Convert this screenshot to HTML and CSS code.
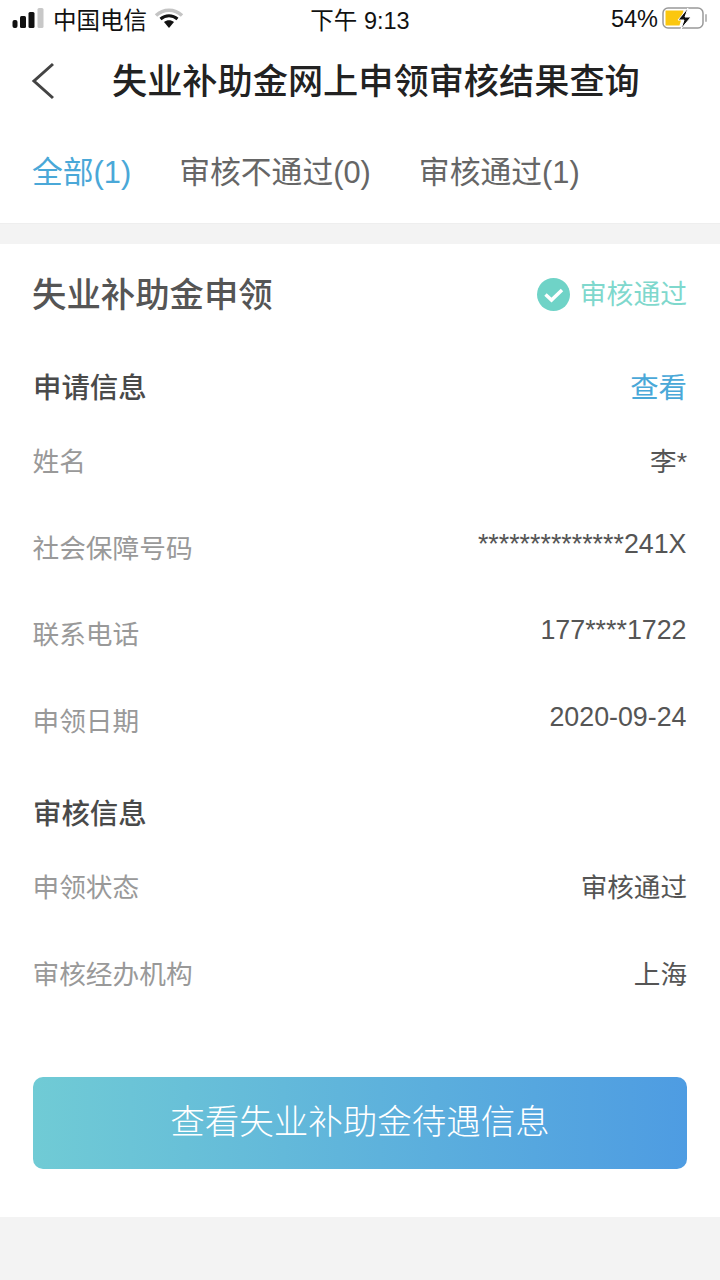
FILE: index.html
```html
<!DOCTYPE html>
<html lang="zh-CN">
<head>
<meta charset="utf-8">
<title>失业补助金网上申领审核结果查询</title>
<link rel="stylesheet" href="styles.css">
</head>
<body>
<div class="status">
  <div class="status-left">
    <svg class="signal" width="34" height="22" viewBox="0 0 34 22"><rect x="0.500" y="12" width="5" height="8" rx="2" fill="#111"/><rect x="8" y="8" width="6" height="12" rx="1.500" fill="#111"/><rect x="16.500" y="4" width="6" height="16" rx="1.500" fill="#111"/><rect x="25.500" y="0" width="6" height="20" rx="1.500" fill="#c8c8c8"/></svg>
    <span class="carrier">中国电信</span>
    <svg class="wifi" width="30" height="22" viewBox="0 0 30 22"><path d="M2 7.500C9.500 .5 20.500 .5 28 7.500" fill="none" stroke="#c4c4c4" stroke-width="3.500"/><path d="M6.500 11C11.500 6.700 18.500 6.700 23.500 11" fill="none" stroke="#111" stroke-width="3"/><path d="M10 14C13 11.500 17 11.500 20 14L15 20Z" fill="#111"/></svg>
  </div>
  <div class="status-time">下午 9:13</div>
  <div class="status-right">
    <span>54%</span>
    <svg width="46" height="26" viewBox="0 0 46 26"><rect x="1" y="2" width="40" height="20" rx="5" fill="none" stroke="#999" stroke-width="1.500"/><path d="M3.500 4.500h18l-4 15h-14z" fill="#fbc70e"/><path d="M26 2l-10 12h6l-3 9 10-12h-6z" fill="#111" stroke="#fff" stroke-width="1"/><rect x="43" y="8" width="2" height="8" rx="1" fill="#bbb"/></svg>
  </div>
</div>
<header class="nav">
  <svg class="back" width="26" height="38" viewBox="0 0 26 38"><path d="M23 2L4 19l19 17" fill="none" stroke="#444" stroke-width="3"/></svg>
  <h1>失业补助金网上申领审核结果查询</h1>
</header>
<nav class="tabs">
  <span class="tab active">全部(1)</span>
  <span class="tab">审核不通过(0)</span>
  <span class="tab">审核通过(1)</span>
</nav>
<main class="card">
  <div class="card-head">
    <h2>失业补助金申领</h2>
    <div class="badge">
      <svg width="33" height="33" viewBox="0 0 33 33"><circle cx="16.500" cy="16.500" r="16.500" fill="#6fd3c7"/><path d="M8.500 16.500l6 5.500L25 12" fill="none" stroke="#fff" stroke-width="3.500"/></svg>
      <span>审核通过</span>
    </div>
  </div>
  <div class="section-head first"><h3>申请信息</h3><a class="link">查看</a></div>
  <div class="row"><span class="label">姓名</span><span class="value">李*</span></div>
  <div class="row"><span class="label">社会保障号码</span><span class="value num">**************241X</span></div>
  <div class="row"><span class="label">联系电话</span><span class="value num">177****1722</span></div>
  <div class="row"><span class="label">申领日期</span><span class="value num">2020-09-24</span></div>
  <div class="section-head second"><h3>审核信息</h3></div>
  <div class="row"><span class="label">申领状态</span><span class="value">审核通过</span></div>
  <div class="row"><span class="label">审核经办机构</span><span class="value">上海</span></div>
  <button class="cta">查看失业补助金待遇信息</button>
</main>
</body>
</html>
```
FILE: styles.css
```css
* { box-sizing: border-box; margin: 0; padding: 0; }
html, body { height: 100%; }
body {
  background: #f3f3f3;
  font-family: "Liberation Sans", "Noto Sans CJK SC", sans-serif;
  color: #444;
  overflow: hidden;
}
.status {
  height: 40px;
  background: #fff;
  display: grid;
  grid-template-columns: 1fr auto 1fr;
  align-items: center;
  padding: 0 12px 2px;
  font-size: 23.500px;
  color: #111;
}
.status-left { display: flex; align-items: center; gap: 7px; }
.status-right { display: flex; align-items: center; justify-content: flex-end; gap: 4px; }
.nav {
  height: 82px;
  background: #fff;
  display: flex;
  align-items: center;
  padding-left: 30px;
}
.back { flex: none; }
.nav h1 {
  font-size: 35.200px;
  font-weight: 500;
  color: #222;
  margin: 0 0 6px 56px;
  white-space: nowrap;
}
.tabs {
  height: 102px;
  background: #fff;
  display: flex;
  gap: 48px;
  align-items: center;
  padding: 0 32px 6px;
  border-bottom: 1px solid #eee;
}
.tab { font-size: 30.800px; color: #666; }
.tab.active { color: #4aa8d8; }
.card {
  margin-top: 20px;
  height: 973px;
  background: #fff;
  padding: 0 33px;
}
.card-head {
  height: 100px;
  display: flex;
  justify-content: space-between;
  align-items: center;
}
.card-head h2 { font-size: 34.400px; font-weight: 500; color: #555; margin: 0 0 4px -1px; }
.badge { display: flex; align-items: center; gap: 10px; font-size: 26.800px; color: #7fd8cd; }
.badge span { margin-bottom: 4px; }
.section-head {
  display: flex;
  justify-content: space-between;
  align-items: center;
}
.section-head.first { height: 100px; padding-bottom: 17px; }
.section-head.second { height: 80px; padding-bottom: 38px; }
.section-head h3 { font-size: 28.400px; font-weight: 500; color: #4a4a4a; }
.link { font-size: 28.400px; color: #4aa8d8; }
.row {
  height: 86.500px;
  display: flex;
  justify-content: space-between;
  align-items: flex-start;
}
.label { font-size: 26.700px; color: #999; line-height: 36px; margin-left: -0.500px; }
.value { font-size: 26.600px; color: #555; line-height: 36px; }
.value.num { font-size: 26.800px; line-height: 34px; margin: -4px 0.500px 0 0; }
.cta {
  display: block;
  width: 100%;
  height: 92px;
  margin-top: 34px;
  padding-bottom: 8px;
  border: none;
  border-radius: 10px;
  background: linear-gradient(90deg, #70cbd5, #4e9ce2);
  color: #fff;
  font: inherit;
  font-size: 34.500px;
  font-weight: 300;
}
```
